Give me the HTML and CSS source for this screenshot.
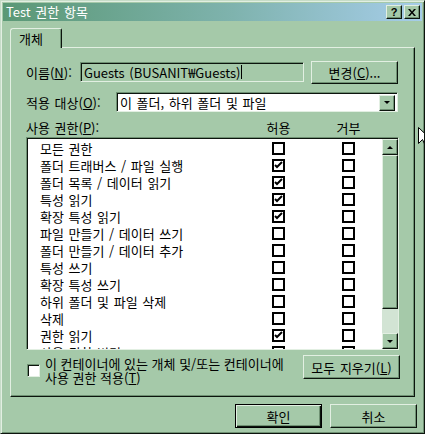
FILE: index.html
```html
<!DOCTYPE html>
<html lang="ko">
<head>
    <meta charset="UTF-8">
    <meta name="viewport" content="width=device-width, initial-scale=1.0">
    <title>Test 권한 항목</title>
    <link rel="stylesheet" href="styles.css">
</head>
<body>
    <div class="window">
        <div class="titlebar">
            <span class="title">Test 권한 항목</span>
            <div class="title-buttons">
                <span class="tbtn">?</span>
                <span class="tbtn">
                    <svg width="8" height="7" viewBox="0 0 8 7"><path d="M0 0h2l2 2.5L6 0h2L5 3.5 8 7H6L4 4.5 2 7H0l3-3.5z" fill="#000"/></svg>
                </span>
            </div>
        </div>

        <div class="tabs">
            <div class="tab">개체</div>
        </div>

        <div class="panel">
            <div class="name-row">
                <span class="lbl name-lbl">이름(<u>N</u>):</span>
                <div class="field">Guests (BUSANIT₩Guests)<span class="caret"></span></div>
                <button class="btn change-btn">변경(<u>C</u>)...</button>
            </div>

            <div class="apply-row">
                <span class="lbl apply-lbl">적용 대상(<u>O</u>):</span>
                <div class="combo">
                    <span class="combo-text">이 폴더, 하위 폴더 및 파일</span>
                    <span class="sbtn combo-btn"><span class="arrow-down"></span></span>
                </div>
            </div>

            <div class="perm-head">
                <span>사용 권한(<u>P</u>):</span>
                <span class="col">허용</span>
                <span></span>
                <span class="col">거부</span>
            </div>

            <div class="perm-list">
                <div class="perm-rows">
                    <div class="perm"><span>모든 권한</span><span class="box"></span><span></span><span class="box"></span></div>
                    <div class="perm"><span>폴더 트래버스 / 파일 실행</span><span class="box on"></span><span></span><span class="box"></span></div>
                    <div class="perm"><span>폴더 목록 / 데이터 읽기</span><span class="box on"></span><span></span><span class="box"></span></div>
                    <div class="perm"><span>특성 읽기</span><span class="box on"></span><span></span><span class="box"></span></div>
                    <div class="perm"><span>확장 특성 읽기</span><span class="box on"></span><span></span><span class="box"></span></div>
                    <div class="perm"><span>파일 만들기 / 데이터 쓰기</span><span class="box"></span><span></span><span class="box"></span></div>
                    <div class="perm"><span>폴더 만들기 / 데이터 추가</span><span class="box"></span><span></span><span class="box"></span></div>
                    <div class="perm"><span>특성 쓰기</span><span class="box"></span><span></span><span class="box"></span></div>
                    <div class="perm"><span>확장 특성 쓰기</span><span class="box"></span><span></span><span class="box"></span></div>
                    <div class="perm"><span>하위 폴더 및 파일 삭제</span><span class="box"></span><span></span><span class="box"></span></div>
                    <div class="perm"><span>삭제</span><span class="box"></span><span></span><span class="box"></span></div>
                    <div class="perm"><span>권한 읽기</span><span class="box on"></span><span></span><span class="box"></span></div>
                    <div class="perm"><span>사용 권한 변경</span><span class="box"></span><span></span><span class="box"></span></div>
                </div>
                <div class="scrollbar">
                    <span class="sbtn"><span class="arrow-up"></span></span>
                    <span class="thumb"></span>
                    <span class="track"></span>
                    <span class="sbtn"><span class="arrow-down"></span></span>
                </div>
            </div>

            <div class="bottom-row">
                <label class="inherit">
                    <span class="cb"></span>
                    <span class="inherit-text">이 컨테이너에 있는 개체 및/또는 컨테이너에<br>사용 권한 적용(<u>T</u>)</span>
                </label>
                <button class="btn clear-btn">모두 지우기(<u>L</u>)</button>
            </div>
        </div>

        <div class="dialog-buttons">
            <button class="btn default">확인</button>
            <button class="btn">취소</button>
        </div>

        <svg class="cursor" width="12" height="20" viewBox="0 0 12 20">
            <path d="M0.5 0.5v16l4-4 3 6.5 2-1-3-6.5h5.5z" fill="#fff" stroke="#000"/>
        </svg>
    </div>
</body>
</html>
```

FILE: styles.css
```css
body {
    margin: 0;
    font-family: "Noto Sans CJK KR", "Liberation Sans", sans-serif;
    font-size: 13px;
    word-spacing: 1px;
    color: #000;
}
u {
    text-decoration-thickness: 1px;
    text-underline-offset: 1px;
}
.window {
    position: relative;
    box-sizing: border-box;
    width: 425px;
    height: 434px;
    overflow: hidden;
    padding: 2px 2px;
    background: #a5c9a9;
    border: 1px solid;
    border-color: #c6dcc8 #0c140d #0c140d #c6dcc8;
    box-shadow: inset 1px 1px #e2efe2, inset -1px -1px #6f9173;
}
.titlebar {
    display: flex;
    align-items: center;
    justify-content: space-between;
    height: 18px;
    padding: 0 2px 0 3px;
    background: linear-gradient(to right, #5a9875, #7fb3ae 55%, #a6cde9);
}
.title {
    color: #fff;
    font-size: 13px;
    line-height: 18px;
}
.title-buttons {
    display: flex;
    gap: 2px;
}
.tbtn {
    box-sizing: border-box;
    display: flex;
    align-items: center;
    justify-content: center;
    width: 16px;
    height: 14px;
    background: #a5c9a9;
    border: 1px solid;
    border-color: #e2efe2 #0c140d #0c140d #e2efe2;
    box-shadow: inset -1px -1px #6f9173;
    font-family: "Liberation Sans", sans-serif;
    font-weight: bold;
    font-size: 11px;
    line-height: 12px;
}
.tabs {
    display: flex;
    margin: 7px 0 0 7px;
    position: relative;
    z-index: 1;
}
.tab {
    box-sizing: border-box;
    width: 52px;
    height: 20px;
    margin-bottom: -1px;
    padding: 2px 0 0 8px;
    background: #a5c9a9;
    border: 1px solid;
    border-bottom: none;
    border-color: #e2efe2 #0c140d #a5c9a9 #e2efe2;
    border-radius: 3px 2px 0 0;
    box-shadow: inset -1px 0 #6f9173;
    line-height: 15px;
}
.panel {
    box-sizing: border-box;
    width: 405px;
    height: 350px;
    margin: 0 7px;
    padding: 13px 14px 0 15px;
    border: 1px solid;
    border-color: #e2efe2 #0c140d #0c140d #e2efe2;
    box-shadow: inset -1px -1px #6f9173;
}
.lbl {
    flex: none;
    line-height: 15px;
}
.name-row {
    display: flex;
    align-items: center;
    height: 22px;
}
.name-lbl {
    width: 54px;
}
.field {
    box-sizing: border-box;
    display: flex;
    align-items: center;
    width: 224px;
    height: 20px;
    padding-left: 3px;
    border: 1px solid;
    border-color: #6f9173 #e2efe2 #e2efe2 #6f9173;
    box-shadow: inset 1px 1px #0c140d;
    line-height: 15px;
    white-space: nowrap;
}
.caret {
    width: 1px;
    height: 14px;
    margin-left: 1px;
    background: #000;
}
.btn {
    box-sizing: border-box;
    height: 23px;
    padding: 0;
    background: #a5c9a9;
    border: 1px solid;
    border-color: #e2efe2 #0c140d #0c140d #e2efe2;
    box-shadow: inset -1px -1px #6f9173;
    font-family: inherit;
    font-size: 13px;
    word-spacing: 1px;
    color: #000;
    line-height: 15px;
}
.change-btn {
    width: 87px;
    margin-left: 7px;
}
.apply-row {
    display: flex;
    align-items: center;
    height: 20px;
    margin-top: 9px;
}
.apply-lbl {
    width: 90px;
}
.combo {
    box-sizing: border-box;
    display: flex;
    align-items: center;
    justify-content: space-between;
    width: 282px;
    height: 20px;
    padding: 0 2px 0 3px;
    background: #fff;
    border: 1px solid;
    border-color: #6f9173 #e2efe2 #e2efe2 #6f9173;
    box-shadow: inset 1px 1px #0c140d;
}
.combo-text {
    line-height: 15px;
    margin-top: 1px;
}
.sbtn {
    box-sizing: border-box;
    display: flex;
    align-items: center;
    justify-content: center;
    flex: none;
    width: 16px;
    height: 16px;
    background: #a5c9a9;
    border: 1px solid;
    border-color: #e2efe2 #0c140d #0c140d #e2efe2;
    box-shadow: inset -1px -1px #6f9173;
}
.combo-btn {
    margin-top: 1px;
}
.arrow-down {
    width: 0;
    height: 0;
    border-left: 3px solid transparent;
    border-right: 3px solid transparent;
    border-top: 3px solid #000;
}
.arrow-up {
    width: 0;
    height: 0;
    border-left: 3px solid transparent;
    border-right: 3px solid transparent;
    border-bottom: 3px solid #000;
}
.perm-head {
    display: grid;
    grid-template-columns: 246px 13px 57px 13px;
    height: 16px;
    margin-top: 8px;
    line-height: 15px;
    white-space: nowrap;
}
.col {
    display: flex;
    justify-content: center;
}
.perm-list {
    box-sizing: border-box;
    display: flex;
    width: 373px;
    height: 213px;
    margin-top: 1px;
    background: #fff;
    border: 1px solid;
    border-color: #6f9173 #e2efe2 #e2efe2 #6f9173;
    box-shadow: inset 1px 1px #0c140d;
    overflow: hidden;
}
.perm-rows {
    flex: 1;
    padding: 2px 0 0 13px;
    overflow: hidden;
}
.perm {
    display: grid;
    grid-template-columns: 232px 13px 57px 13px;
    align-items: center;
    height: 17px;
    line-height: 15px;
    white-space: nowrap;
}
.box {
    box-sizing: border-box;
    width: 13px;
    height: 13px;
    border: 2px solid #000;
    background: #fff;
}
.box.on {
    background: #fff url("data:image/svg+xml,%3Csvg xmlns='http://www.w3.org/2000/svg' width='9' height='9'%3E%3Cpath d='M1 4l2 2 5-5' fill='none' stroke='%23000' stroke-width='2'/%3E%3C/svg%3E") 0 0 no-repeat;
}
.scrollbar {
    display: flex;
    flex-direction: column;
    width: 16px;
    margin: 1px 0 0 0;
}
.thumb {
    flex: 1;
    box-sizing: border-box;
    background: #a5c9a9;
    border: 1px solid;
    border-color: #e2efe2 #0c140d #0c140d #e2efe2;
    box-shadow: inset -1px -1px #6f9173;
}
.track {
    height: 24px;
    background: #d2e4d4;
}
.bottom-row {
    display: flex;
    justify-content: space-between;
    align-items: flex-start;
    width: 374px;
    margin-top: 5px;
}
.inherit {
    display: flex;
    align-items: flex-start;
    padding: 2px 0 0 1px;
}
.cb {
    box-sizing: border-box;
    flex: none;
    width: 13px;
    height: 13px;
    margin-top: 7px;
    background: #fff;
    border: 1px solid;
    border-color: #6f9173 #e2efe2 #e2efe2 #6f9173;
    box-shadow: inset 1px 1px #0c140d;
}
.inherit-text {
    margin-left: 5px;
    line-height: 14px;
    word-spacing: 0;
}
.clear-btn {
    width: 97px;
    height: 24px;
}
.dialog-buttons {
    display: flex;
    justify-content: flex-end;
    gap: 8px;
    margin: 7px 5px 0 0;
}
.dialog-buttons .btn {
    width: 87px;
    height: 24px;
}
.dialog-buttons .default {
    border-color: #000;
    box-shadow: inset 1px 1px #e2efe2, inset -1px -1px #0c140d, inset -2px -2px #6f9173;
}
.cursor {
    position: absolute;
    left: 417px;
    top: 126px;
}
```
